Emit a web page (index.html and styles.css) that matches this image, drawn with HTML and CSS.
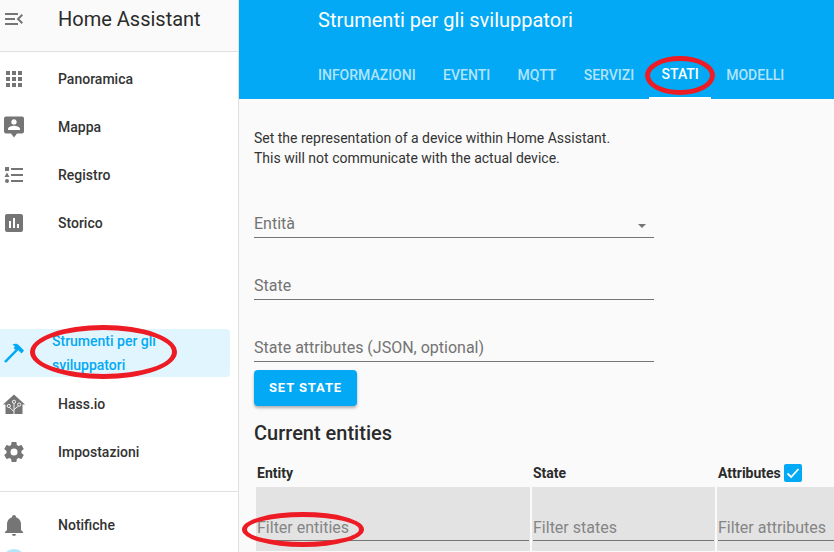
FILE: index.html
```html
<!DOCTYPE html>
<html lang="it">
<head>
  <meta charset="UTF-8">
  <title>Strumenti per gli sviluppatori</title>
  <link rel="stylesheet" href="styles.css">
</head>
<body>
<div class="app">
  <aside class="sidebar">
    <div class="side-head">
      <svg class="icon" viewBox="0 0 24 24"><path d="M21,15.61L19.59,17L14.58,12L19.59,7L21,8.39L17.44,12L21,15.61M3,6H16V8H3V6M3,13V11H13V13H3M3,18V16H16V18H3Z"/></svg>
      <span class="side-title">Home Assistant</span>
    </div>
    <nav class="side-top">
      <a class="item"><svg class="icon" viewBox="0 0 24 24"><path d="M16,20H20V16H16M16,14H20V10H16M10,8H14V4H10M16,8H20V4H16M10,14H14V10H10M4,14H8V10H4M4,20H8V16H4M10,20H14V16H10M4,8H8V4H4V8Z"/></svg><span>Panoramica</span></a>
      <a class="item"><svg class="icon" viewBox="0 0 24 24"><path fill-rule="evenodd" d="M20,1.5H4C2.9,1.5 2,2.4 2,3.5V16.5A2,2 0 0 0 4,18.5H9L12,22.5L15,18.5H20A2,2 0 0 0 22,16.5V3.5C22,2.4 21.1,1.5 20,1.5ZM12,4.2C13.5,4.2 14.7,5.4 14.7,6.9C14.7,8.4 13.5,9.6 12,9.6C10.5,9.6 9.3,8.4 9.3,6.9C9.3,5.4 10.5,4.2 12,4.2ZM18,15H6V14C6,12 10,10.8 12,10.8C14,10.8 18,12 18,14Z"/></svg><span>Mappa</span></a>
      <a class="item"><svg class="icon" viewBox="0 0 24 24"><path d="M5,9.5L7.5,14H2.5L5,9.5M3,4H7V8H3V4M5,20A2,2 0 0,0 7,18A2,2 0 0,0 5,16A2,2 0 0,0 3,18A2,2 0 0,0 5,20M9,5V7H21V5H9M9,19H21V17H9V19M9,13H21V11H9V13Z"/></svg><span>Registro</span></a>
      <a class="item"><svg class="icon" viewBox="0 0 24 24"><path d="M17,17H15V13H17M13,17H11V7H13M9,17H7V10H9M19,3H5C3.89,3 3,3.89 3,5V19A2,2 0 0,0 5,21H19A2,2 0 0,0 21,19V5C21,3.89 20.1,3 19,3Z"/></svg><span>Storico</span></a>
    </nav>
    <nav class="side-low">
      <a class="item item-active"><svg class="icon" viewBox="0 0 24 24"><path d="M2,20.2L13.4,8.8L11.6,7L13,5.5L10.5,3.6C12.5,2.2 15,2.4 16.6,4L22,9.4L19.6,12.6L16.2,9.2L15.3,10.3L4,21.8Z"/></svg><span>Strumenti per gli sviluppatori</span></a>
      <a class="item"><svg class="icon" viewBox="0 0 24 24"><path d="M12,2.5L23,12.5H20.5V22H3.5V12.5H1Z"/><g class="hass-lines"><path d="M12,22V11.5M12,19.5L7.5,15.5M12,17.5L16.5,14"/><circle cx="12" cy="9.8" r="1.6"/><circle cx="6.8" cy="14" r="1.6"/><circle cx="17.2" cy="12.6" r="1.6"/></g></svg><span>Hass.io</span></a>
      <a class="item"><svg class="icon" viewBox="0 0 24 24"><path d="M12,15.5A3.5,3.5 0 0,1 8.5,12A3.5,3.5 0 0,1 12,8.5A3.5,3.5 0 0,1 15.5,12A3.5,3.5 0 0,1 12,15.5M19.43,12.97C19.47,12.65 19.5,12.33 19.5,12C19.5,11.67 19.47,11.34 19.43,11L21.54,9.37C21.73,9.22 21.78,8.95 21.66,8.73L19.66,5.27C19.54,5.05 19.27,4.96 19.05,5.05L16.56,6.05C16.04,5.66 15.5,5.32 14.87,5.07L14.5,2.42C14.46,2.18 14.25,2 14,2H10C9.75,2 9.54,2.18 9.5,2.42L9.13,5.07C8.5,5.32 7.96,5.66 7.44,6.05L4.95,5.05C4.73,4.96 4.46,5.05 4.34,5.27L2.34,8.73C2.21,8.95 2.27,9.22 2.46,9.37L4.57,11C4.53,11.34 4.5,11.67 4.5,12C4.5,12.33 4.53,12.65 4.57,12.97L2.46,14.63C2.27,14.78 2.21,15.05 2.34,15.27L4.34,18.73C4.46,18.95 4.73,19.03 4.95,18.95L7.44,17.94C7.96,18.34 8.5,18.68 9.13,18.93L9.5,21.58C9.54,21.82 9.75,22 10,22H14C14.25,22 14.46,21.82 14.5,21.58L14.87,18.93C15.5,18.67 16.04,18.34 16.56,17.94L19.05,18.95C19.27,19.03 19.54,18.95 19.66,18.73L21.66,15.27C21.78,15.05 21.73,14.78 21.54,14.63L19.43,12.97Z"/></svg><span>Impostazioni</span></a>
    </nav>
    <nav class="side-foot">
      <a class="item"><svg class="icon" viewBox="0 0 24 24"><path d="M21,19V20H3V19L5,17V11C5,7.9 7.03,5.17 10,4.29C10,4.19 10,4.1 10,4A2,2 0 0,1 12,2A2,2 0 0,1 14,4C14,4.1 14,4.19 14,4.29C16.97,5.17 19,7.9 19,11V17L21,19M14,21A2,2 0 0,1 12,23A2,2 0 0,1 10,21"/></svg><span>Notifiche</span></a>
      <div class="avatar"></div>
    </nav>
  </aside>

  <main class="main">
    <header class="topbar">
      <div class="page-title">Strumenti per gli sviluppatori</div>
      <div class="tabs">
        <a class="tab">Informazioni</a>
        <a class="tab">Eventi</a>
        <a class="tab">MQTT</a>
        <a class="tab">Servizi</a>
        <a class="tab tab-active">Stati</a>
        <a class="tab">Modelli</a>
      </div>
    </header>

    <section class="content">
      <p class="intro">Set the representation of a device within Home Assistant.<br>This will not communicate with the actual device.</p>
      <div class="field field-first"><span>Entità</span><i class="caret"></i></div>
      <div class="field"><span>State</span></div>
      <div class="field"><span>State attributes (JSON, optional)</span></div>
      <button class="btn">Set state</button>
      <h2 class="subtitle">Current entities</h2>

      <div class="entities">
        <div class="th">Entity</div>
        <div class="th">State</div>
        <div class="th">Attributes <span class="check"><svg viewBox="0 0 18 18"><path d="M3.5,9.5L7.2,13L14.5,5" fill="none" stroke="#fff" stroke-width="1.8"/></svg></span></div>
        <div class="filter"><span>Filter entities</span></div>
        <div class="filter"><span>Filter states</span></div>
        <div class="filter"><span>Filter attributes</span></div>
      </div>
    </section>
  </main>

  <!-- segni rossi sopra lo screenshot -->
  <div class="mark mark-side"></div>
  <div class="mark mark-tab"></div>
  <div class="mark mark-filter"></div>
</div>
</body>
</html>
```

FILE: styles.css
```css
* {
    box-sizing: border-box;
}
html, body {
    margin: 0;
    height: 100%;
    overflow: hidden;
}
body {
    font-family: Roboto, "Liberation Sans", sans-serif;
    font-size: 14px;
    color: #212121;
    background-color: #fafafa;
}
.app {
    position: relative;
    display: flex;
    width: 834px;
    height: 552px;
    overflow: hidden;
}

/* sidebar */
.sidebar {
    width: 239px;
    flex: none;
    height: 552px;
    overflow: hidden;
    background-color: #fff;
    border-right: 1px solid #e0e0e0;
}
.side-head {
    display: flex;
    align-items: center;
    height: 52px;
    padding: 0 0 14px 2px;
    background-color: #fafafa;
    border-bottom: 1px solid #e0e0e0;
}
.side-title {
    margin-left: 32px;
    font-size: 20px;
    color: #2b2b2b;
}
.icon {
    width: 24px;
    height: 24px;
    flex: none;
    fill: #757575;
}
.hass-lines {
    fill: none;
    stroke: #fff;
    stroke-width: 0.9;
}
.side-top {
    padding-top: 3px;
    height: 277px;
}
.side-low {
    height: 163px;
    border-bottom: 1px solid #e0e0e0;
}
.side-foot {
    padding-top: 9px;
}
.item {
    display: flex;
    align-items: center;
    height: 48px;
    padding-left: 2px;
    font-weight: 500;
    color: #333;
}
.item span {
    margin-left: 32px;
}
.item-active {
    width: 230px;
    margin-bottom: 3px;
    border-radius: 0 4px 4px 0;
    background-color: #e1f5fe;
    color: #03a9f4;
    line-height: 24px;
}
.item-active .icon {
    fill: #03a9f4;
}
.item-active span {
    margin-left: 26px;
    width: 130px;
}
.avatar {
    width: 24px;
    height: 24px;
    margin-left: 2px;
    border-radius: 50%;
    background-color: #b3e5fc;
}

/* header */
.main {
    flex: 1;
    min-width: 0;
}
.topbar {
    height: 99px;
    padding-left: 79px;
    background-color: #03a9f4;
    color: #fff;
}
.page-title {
    height: 51px;
    padding-top: 8px;
    font-size: 20px;
    line-height: 24px;
}
.tabs {
    display: flex;
    height: 48px;
    margin-left: -13.7px;
}
.tab {
    display: flex;
    align-items: center;
    margin: 0 1.2px;
    padding: 0 12.5px;
    font-weight: 500;
    text-transform: uppercase;
    color: rgba(255, 255, 255, 0.7);
}
.tab-active {
    color: #fff;
    border-bottom: 2px solid #fff;
}

/* form */
.content {
    padding: 29px 0 0 15px;
}
.intro {
    margin: 0;
    line-height: 20px;
    color: #333;
}
.field {
    position: relative;
    width: 400px;
    height: 62px;
    padding-top: 36px;
    border-bottom: 1px solid #757575;
    font-size: 16px;
    line-height: 24px;
    color: #737373;
}
.field-first {
    height: 70px;
    padding-top: 44px;
}
.caret {
    position: absolute;
    right: 8px;
    bottom: 9px;
    border: 4px solid transparent;
    border-bottom: 0;
    border-top-color: #757575;
}
.btn {
    display: block;
    width: 103px;
    height: 36px;
    margin: 8px 0 0;
    padding: 0 0 2px;
    border: none;
    border-radius: 4px;
    background-color: #03a9f4;
    color: #fff;
    font-family: inherit;
    font-size: 13px;
    font-weight: 700;
    letter-spacing: 0.9px;
    text-transform: uppercase;
    box-shadow: 0 2px 3px rgba(0, 0, 0, 0.3);
}
.subtitle {
    margin: 15px 0 0;
    font-size: 20px;
    font-weight: 500;
    line-height: 24px;
    color: #2b2b2b;
}

/* tabella */
.entities {
    display: grid;
    grid-template-columns: 274px 183px 200px;
    column-gap: 2px;
    margin: 14px 0 0 2px;
}
.th {
    display: flex;
    align-items: center;
    height: 28px;
    padding-left: 1px;
    font-weight: 700;
    color: #2b2b2b;
}
.check {
    display: flex;
    width: 18px;
    height: 18px;
    margin-left: 3px;
    border-radius: 2px;
    background-color: #03a9f4;
}
.filter {
    height: 64px;
    padding: 29px 1px 0;
    background-color: #e3e3e3;
    font-size: 16px;
    line-height: 24px;
    color: #858585;
}
.filter span {
    display: block;
    height: 25px;
    border-bottom: 1px solid #757575;
}

/* annotazioni */
.mark {
    position: absolute;
    border: 5px solid #ed1c24;
    border-radius: 50%;
}
.mark-side {
    left: 30px;
    top: 325px;
    width: 147px;
    height: 54px;
}
.mark-tab {
    left: 645px;
    top: 56px;
    width: 70px;
    height: 39px;
}
.mark-filter {
    left: 242px;
    top: 512px;
    width: 122px;
    height: 35px;
}
```
